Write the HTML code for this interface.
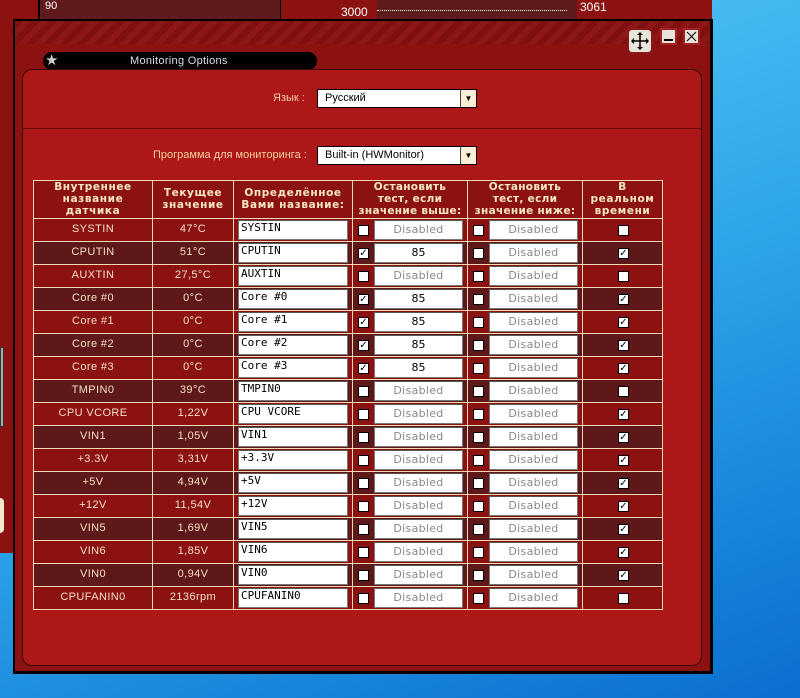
<!DOCTYPE html>
<html><head><meta charset="utf-8"><style>
*{margin:0;padding:0;box-sizing:border-box}
body{width:800px;height:698px;overflow:hidden;position:relative;font-family:"Liberation Sans","DejaVu Sans",sans-serif;background:linear-gradient(160deg,#5fd0f5 0%,#2fa6ea 50%,#0a6fd0 100%)}
.abs{position:absolute}
.t{position:absolute;font-size:11px;color:#f4e0c4;text-align:center;letter-spacing:.4px}
.h{font-family:"DejaVu Sans","Liberation Sans",sans-serif;font-weight:bold;font-size:10.5px;line-height:12px;color:#f8e8c0;letter-spacing:.6px}
.inp{position:absolute;background:#fff;border:1px solid #777;border-top-color:#555;font-size:11px;height:20px;line-height:17px;font-family:"DejaVu Sans Mono","Liberation Mono",monospace}
.dis{color:#888;text-align:center;font-family:"DejaVu Sans","Liberation Sans",sans-serif;letter-spacing:.3px}
.val{color:#000;text-align:center;font-family:"DejaVu Sans","Liberation Sans",sans-serif}
.nm{color:#000;padding-left:2px;line-height:14px;font-size:11px;font-family:"DejaVu Sans Mono","Liberation Mono",monospace}
.cb{position:absolute;width:11px;height:11px;background:#fff;border:1px solid #000;font-size:10px;line-height:9px;text-align:center;color:#000;font-weight:bold}
</style></head><body>
<div class="abs" style="left:0;top:0;width:712px;height:20px;background:#8c1212"></div>
<div class="abs" style="left:38px;top:0;width:242px;height:19px;background:#5f1a1c;border-left:2px solid #000"></div>
<div class="abs" style="left:45px;top:0;font-size:11px;color:#fff">90</div>
<div class="abs" style="left:280px;top:0;width:98px;height:19px;background:#8c1212;border-left:1px solid #000"></div>
<div class="abs" style="left:341px;top:5px;font-size:12px;color:#fff">3000</div>
<div class="abs" style="left:377px;top:0;width:200px;height:19px;background:#5f1a1c"></div>
<div class="abs" style="left:377px;top:10px;width:190px;height:1px;border-top:1px dotted #fff"></div>
<div class="abs" style="left:580px;top:0;font-size:12px;color:#fff">3061</div>
<div class="abs" style="left:0;top:20px;width:13px;height:533px;background:#8c1212"></div>
<div class="abs" style="left:0;top:347px;width:4px;height:80px;background:#aaa;border:1px solid #333"></div>
<div class="abs" style="left:0;top:498px;width:4px;height:35px;background:#f4e8c8;border-radius:0 4px 4px 0"></div>
<div class="abs" style="left:13px;top:19px;width:700px;height:655px;background:#8c1212;border:2px solid #000;border-right-width:3px;border-bottom-width:3px"></div>
<div class="abs" style="left:15px;top:21px;width:695px;height:23px;background:repeating-linear-gradient(135deg,#7e1010 0 6px,#8e1616 6px 12px)"></div>
<div class="abs" style="left:43px;top:52px;width:274px;height:18px;background:#000;border-radius:9px"></div>
<div class="abs" style="left:45px;top:52px;font-size:15px;color:#ccc;line-height:18px">★</div>
<div class="abs" style="left:130px;top:52px;font-size:11px;color:#dde;line-height:18px;letter-spacing:.3px">Monitoring Options</div>
<div class="abs" style="left:627px;top:28px;width:26px;height:26px;background:#8a1818;border-radius:3px"></div>
<div class="abs" style="left:629px;top:30px;width:22px;height:22px;background:#e8e4d8;border-radius:3px"></div>
<svg class="abs" style="left:629px;top:30px" width="22" height="22" viewBox="0 0 22 22"><path d="M11 3v16M3 11h16" stroke="#000" stroke-width="1.5"/><path d="M11 2l-3 3h6zM11 20l-3-3h6zM2 11l3-3v6zM20 11l-3-3v6z" fill="#000"/></svg>
<div class="abs" style="left:660px;top:28px;width:17px;height:17px;background:#e8e4d8;border:2px solid #a52020"></div>
<div class="abs" style="left:664px;top:39px;width:9px;height:2px;background:#000"></div>
<div class="abs" style="left:683px;top:28px;width:17px;height:17px;background:#e8e4d8;border:2px solid #a52020"></div>
<svg class="abs" style="left:685px;top:30px" width="13" height="13"><path d="M2 2L11 11M11 2L2 11" stroke="#000" stroke-width="1"/></svg>
<div class="abs" style="left:22px;top:69px;width:680px;height:597px;background:#ad1717;border:1px solid #3a0a0a;border-radius:10px"></div>
<div class="abs" style="left:23px;top:128px;width:678px;height:1px;background:#6a0c0c"></div>
<div class="abs" style="left:273px;top:92px;font-size:11px;color:#f4d2a0">Язык :</div>
<div class="abs" style="left:317px;top:89px;width:160px;height:19px;background:#fff;border:1px solid #000;font-size:11px;line-height:17px;padding-left:7px">Русский</div>
<div class="abs" style="left:460px;top:90px;width:16px;height:17px;background:#fbeed6;border-left:1px solid #444;font-size:8px;text-align:center;line-height:17px">▼</div>
<div class="abs" style="left:153px;top:149px;font-size:11px;color:#f4d2a0">Программа для мониторинга :</div>
<div class="abs" style="left:317px;top:146px;width:160px;height:19px;background:#fff;border:1px solid #000;font-size:11px;line-height:17px;padding-left:7px">Built-in (HWMonitor)</div>
<div class="abs" style="left:460px;top:147px;width:16px;height:17px;background:#fbeed6;border-left:1px solid #444;font-size:8px;text-align:center;line-height:17px">▼</div>
<div class="abs" style="left:33px;top:180px;width:630px;height:430px;background:#8c1212;border:1px solid #f0d8b0"></div>
<div class="abs" style="left:34px;top:241px;width:628px;height:23px;background:#5e181a"></div>
<div class="abs" style="left:34px;top:287px;width:628px;height:23px;background:#5e181a"></div>
<div class="abs" style="left:34px;top:333px;width:628px;height:23px;background:#5e181a"></div>
<div class="abs" style="left:34px;top:379px;width:628px;height:23px;background:#5e181a"></div>
<div class="abs" style="left:34px;top:425px;width:628px;height:23px;background:#5e181a"></div>
<div class="abs" style="left:34px;top:471px;width:628px;height:23px;background:#5e181a"></div>
<div class="abs" style="left:34px;top:517px;width:628px;height:23px;background:#5e181a"></div>
<div class="abs" style="left:34px;top:563px;width:628px;height:23px;background:#5e181a"></div>
<div class="abs" style="left:152px;top:180px;width:1px;height:430px;background:#f0d8b0"></div>
<div class="abs" style="left:233px;top:180px;width:1px;height:430px;background:#f0d8b0"></div>
<div class="abs" style="left:352px;top:180px;width:1px;height:430px;background:#f0d8b0"></div>
<div class="abs" style="left:467px;top:180px;width:1px;height:430px;background:#f0d8b0"></div>
<div class="abs" style="left:582px;top:180px;width:1px;height:430px;background:#f0d8b0"></div>
<div class="abs" style="left:33px;top:218px;width:630px;height:1px;background:#f0d8b0"></div>
<div class="abs" style="left:33px;top:241px;width:630px;height:1px;background:#f0d8b0"></div>
<div class="abs" style="left:33px;top:264px;width:630px;height:1px;background:#f0d8b0"></div>
<div class="abs" style="left:33px;top:287px;width:630px;height:1px;background:#f0d8b0"></div>
<div class="abs" style="left:33px;top:310px;width:630px;height:1px;background:#f0d8b0"></div>
<div class="abs" style="left:33px;top:333px;width:630px;height:1px;background:#f0d8b0"></div>
<div class="abs" style="left:33px;top:356px;width:630px;height:1px;background:#f0d8b0"></div>
<div class="abs" style="left:33px;top:379px;width:630px;height:1px;background:#f0d8b0"></div>
<div class="abs" style="left:33px;top:402px;width:630px;height:1px;background:#f0d8b0"></div>
<div class="abs" style="left:33px;top:425px;width:630px;height:1px;background:#f0d8b0"></div>
<div class="abs" style="left:33px;top:448px;width:630px;height:1px;background:#f0d8b0"></div>
<div class="abs" style="left:33px;top:471px;width:630px;height:1px;background:#f0d8b0"></div>
<div class="abs" style="left:33px;top:494px;width:630px;height:1px;background:#f0d8b0"></div>
<div class="abs" style="left:33px;top:517px;width:630px;height:1px;background:#f0d8b0"></div>
<div class="abs" style="left:33px;top:540px;width:630px;height:1px;background:#f0d8b0"></div>
<div class="abs" style="left:33px;top:563px;width:630px;height:1px;background:#f0d8b0"></div>
<div class="abs" style="left:33px;top:586px;width:630px;height:1px;background:#f0d8b0"></div>
<div class="t h" style="left:34px;top:181px;width:118px">Внутреннее<br>название<br>датчика</div>
<div class="t h" style="left:153px;top:187px;width:80px">Текущее<br>значение</div>
<div class="t h" style="left:234px;top:187px;width:118px">Определённое<br>Вами название:</div>
<div class="t h" style="left:353px;top:181px;width:114px;letter-spacing:.3px">Остановить<br>тест, если<br>значение выше:</div>
<div class="t h" style="left:468px;top:181px;width:114px;letter-spacing:.3px">Остановить<br>тест, если<br>значение ниже:</div>
<div class="t h" style="left:583px;top:181px;width:79px">В<br>реальном<br>времени</div>

<div class="t" style="left:34px;top:223px;width:118px">SYSTIN</div><div class="t" style="left:153px;top:223px;width:80px">47°C</div>
<div class="inp nm" style="left:238px;top:220px;width:110px">SYSTIN</div>
<div class="cb" style="left:358px;top:225px"></div><div class="inp dis" style="left:374px;top:220px;width:89px">Disabled</div>
<div class="cb" style="left:473px;top:225px"></div><div class="inp dis" style="left:489px;top:220px;width:89px">Disabled</div>
<div class="cb" style="left:618px;top:225px"></div>

<div class="t" style="left:34px;top:246px;width:118px">CPUTIN</div><div class="t" style="left:153px;top:246px;width:80px">51°C</div>
<div class="inp nm" style="left:238px;top:243px;width:110px">CPUTIN</div>
<div class="cb" style="left:358px;top:248px">✓</div><div class="inp val" style="left:374px;top:243px;width:89px">85</div>
<div class="cb" style="left:473px;top:248px"></div><div class="inp dis" style="left:489px;top:243px;width:89px">Disabled</div>
<div class="cb" style="left:618px;top:248px">✓</div>

<div class="t" style="left:34px;top:269px;width:118px">AUXTIN</div><div class="t" style="left:153px;top:269px;width:80px">27,5°C</div>
<div class="inp nm" style="left:238px;top:266px;width:110px">AUXTIN</div>
<div class="cb" style="left:358px;top:271px"></div><div class="inp dis" style="left:374px;top:266px;width:89px">Disabled</div>
<div class="cb" style="left:473px;top:271px"></div><div class="inp dis" style="left:489px;top:266px;width:89px">Disabled</div>
<div class="cb" style="left:618px;top:271px"></div>

<div class="t" style="left:34px;top:292px;width:118px">Core #0</div><div class="t" style="left:153px;top:292px;width:80px">0°C</div>
<div class="inp nm" style="left:238px;top:289px;width:110px">Core #0</div>
<div class="cb" style="left:358px;top:294px">✓</div><div class="inp val" style="left:374px;top:289px;width:89px">85</div>
<div class="cb" style="left:473px;top:294px"></div><div class="inp dis" style="left:489px;top:289px;width:89px">Disabled</div>
<div class="cb" style="left:618px;top:294px">✓</div>

<div class="t" style="left:34px;top:315px;width:118px">Core #1</div><div class="t" style="left:153px;top:315px;width:80px">0°C</div>
<div class="inp nm" style="left:238px;top:312px;width:110px">Core #1</div>
<div class="cb" style="left:358px;top:317px">✓</div><div class="inp val" style="left:374px;top:312px;width:89px">85</div>
<div class="cb" style="left:473px;top:317px"></div><div class="inp dis" style="left:489px;top:312px;width:89px">Disabled</div>
<div class="cb" style="left:618px;top:317px">✓</div>

<div class="t" style="left:34px;top:338px;width:118px">Core #2</div><div class="t" style="left:153px;top:338px;width:80px">0°C</div>
<div class="inp nm" style="left:238px;top:335px;width:110px">Core #2</div>
<div class="cb" style="left:358px;top:340px">✓</div><div class="inp val" style="left:374px;top:335px;width:89px">85</div>
<div class="cb" style="left:473px;top:340px"></div><div class="inp dis" style="left:489px;top:335px;width:89px">Disabled</div>
<div class="cb" style="left:618px;top:340px">✓</div>

<div class="t" style="left:34px;top:361px;width:118px">Core #3</div><div class="t" style="left:153px;top:361px;width:80px">0°C</div>
<div class="inp nm" style="left:238px;top:358px;width:110px">Core #3</div>
<div class="cb" style="left:358px;top:363px">✓</div><div class="inp val" style="left:374px;top:358px;width:89px">85</div>
<div class="cb" style="left:473px;top:363px"></div><div class="inp dis" style="left:489px;top:358px;width:89px">Disabled</div>
<div class="cb" style="left:618px;top:363px">✓</div>

<div class="t" style="left:34px;top:384px;width:118px">TMPIN0</div><div class="t" style="left:153px;top:384px;width:80px">39°C</div>
<div class="inp nm" style="left:238px;top:381px;width:110px">TMPIN0</div>
<div class="cb" style="left:358px;top:386px"></div><div class="inp dis" style="left:374px;top:381px;width:89px">Disabled</div>
<div class="cb" style="left:473px;top:386px"></div><div class="inp dis" style="left:489px;top:381px;width:89px">Disabled</div>
<div class="cb" style="left:618px;top:386px"></div>

<div class="t" style="left:34px;top:407px;width:118px">CPU VCORE</div><div class="t" style="left:153px;top:407px;width:80px">1,22V</div>
<div class="inp nm" style="left:238px;top:404px;width:110px">CPU VCORE</div>
<div class="cb" style="left:358px;top:409px"></div><div class="inp dis" style="left:374px;top:404px;width:89px">Disabled</div>
<div class="cb" style="left:473px;top:409px"></div><div class="inp dis" style="left:489px;top:404px;width:89px">Disabled</div>
<div class="cb" style="left:618px;top:409px">✓</div>

<div class="t" style="left:34px;top:430px;width:118px">VIN1</div><div class="t" style="left:153px;top:430px;width:80px">1,05V</div>
<div class="inp nm" style="left:238px;top:427px;width:110px">VIN1</div>
<div class="cb" style="left:358px;top:432px"></div><div class="inp dis" style="left:374px;top:427px;width:89px">Disabled</div>
<div class="cb" style="left:473px;top:432px"></div><div class="inp dis" style="left:489px;top:427px;width:89px">Disabled</div>
<div class="cb" style="left:618px;top:432px">✓</div>

<div class="t" style="left:34px;top:453px;width:118px">+3.3V</div><div class="t" style="left:153px;top:453px;width:80px">3,31V</div>
<div class="inp nm" style="left:238px;top:450px;width:110px">+3.3V</div>
<div class="cb" style="left:358px;top:455px"></div><div class="inp dis" style="left:374px;top:450px;width:89px">Disabled</div>
<div class="cb" style="left:473px;top:455px"></div><div class="inp dis" style="left:489px;top:450px;width:89px">Disabled</div>
<div class="cb" style="left:618px;top:455px">✓</div>

<div class="t" style="left:34px;top:476px;width:118px">+5V</div><div class="t" style="left:153px;top:476px;width:80px">4,94V</div>
<div class="inp nm" style="left:238px;top:473px;width:110px">+5V</div>
<div class="cb" style="left:358px;top:478px"></div><div class="inp dis" style="left:374px;top:473px;width:89px">Disabled</div>
<div class="cb" style="left:473px;top:478px"></div><div class="inp dis" style="left:489px;top:473px;width:89px">Disabled</div>
<div class="cb" style="left:618px;top:478px">✓</div>

<div class="t" style="left:34px;top:499px;width:118px">+12V</div><div class="t" style="left:153px;top:499px;width:80px">11,54V</div>
<div class="inp nm" style="left:238px;top:496px;width:110px">+12V</div>
<div class="cb" style="left:358px;top:501px"></div><div class="inp dis" style="left:374px;top:496px;width:89px">Disabled</div>
<div class="cb" style="left:473px;top:501px"></div><div class="inp dis" style="left:489px;top:496px;width:89px">Disabled</div>
<div class="cb" style="left:618px;top:501px">✓</div>

<div class="t" style="left:34px;top:522px;width:118px">VIN5</div><div class="t" style="left:153px;top:522px;width:80px">1,69V</div>
<div class="inp nm" style="left:238px;top:519px;width:110px">VIN5</div>
<div class="cb" style="left:358px;top:524px"></div><div class="inp dis" style="left:374px;top:519px;width:89px">Disabled</div>
<div class="cb" style="left:473px;top:524px"></div><div class="inp dis" style="left:489px;top:519px;width:89px">Disabled</div>
<div class="cb" style="left:618px;top:524px">✓</div>

<div class="t" style="left:34px;top:545px;width:118px">VIN6</div><div class="t" style="left:153px;top:545px;width:80px">1,85V</div>
<div class="inp nm" style="left:238px;top:542px;width:110px">VIN6</div>
<div class="cb" style="left:358px;top:547px"></div><div class="inp dis" style="left:374px;top:542px;width:89px">Disabled</div>
<div class="cb" style="left:473px;top:547px"></div><div class="inp dis" style="left:489px;top:542px;width:89px">Disabled</div>
<div class="cb" style="left:618px;top:547px">✓</div>

<div class="t" style="left:34px;top:568px;width:118px">VIN0</div><div class="t" style="left:153px;top:568px;width:80px">0,94V</div>
<div class="inp nm" style="left:238px;top:565px;width:110px">VIN0</div>
<div class="cb" style="left:358px;top:570px"></div><div class="inp dis" style="left:374px;top:565px;width:89px">Disabled</div>
<div class="cb" style="left:473px;top:570px"></div><div class="inp dis" style="left:489px;top:565px;width:89px">Disabled</div>
<div class="cb" style="left:618px;top:570px">✓</div>

<div class="t" style="left:34px;top:591px;width:118px">CPUFANIN0</div><div class="t" style="left:153px;top:591px;width:80px">2136rpm</div>
<div class="inp nm" style="left:238px;top:588px;width:110px">CPUFANIN0</div>
<div class="cb" style="left:358px;top:593px"></div><div class="inp dis" style="left:374px;top:588px;width:89px">Disabled</div>
<div class="cb" style="left:473px;top:593px"></div><div class="inp dis" style="left:489px;top:588px;width:89px">Disabled</div>
<div class="cb" style="left:618px;top:593px"></div>
</body></html>
